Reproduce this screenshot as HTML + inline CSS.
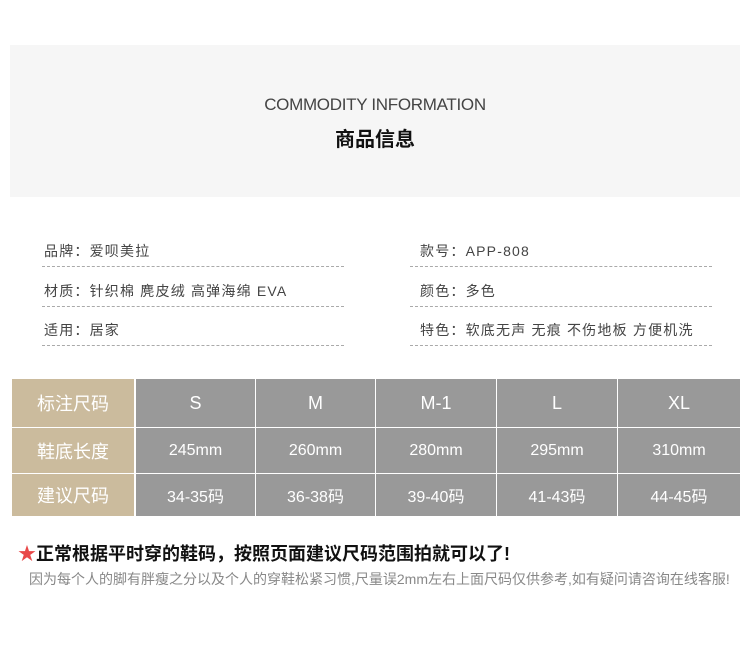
<!DOCTYPE html>
<html><head><meta charset="utf-8"><style>
*{margin:0;padding:0;box-sizing:border-box}
body{width:750px;height:660px;background:#fff;position:relative;font-family:"Liberation Sans","Noto Sans CJK SC",sans-serif;overflow:hidden}
.a{position:absolute;white-space:nowrap}
.box{left:10px;top:45px;width:730px;height:152px;background:#f6f6f6}
.en{left:0;width:750px;text-align:center;top:95px;font-size:17px;color:#444;font-weight:300;letter-spacing:-0.3px}
.zh{left:0;width:750px;text-align:center;top:123px;font-size:20px;font-weight:bold;color:#111}
.f{font-size:14px;color:#444;letter-spacing:1.2px}
.d{height:0;border-top:1px dashed #aaa}
.c{position:absolute;color:#fff;display:flex;align-items:center;justify-content:center;font-size:18px}
.n{font-size:16px}
</style></head><body>
<div class="a box"></div>
<div class="a en">COMMODITY INFORMATION</div>
<div class="a zh">商品信息</div>

<div class="a f" style="left:44px;top:241px">品牌：爱呗美拉</div>
<div class="a f" style="left:420px;top:241px">款号：APP-808</div>
<div class="a f" style="left:44px;top:281px">材质：针织棉 麂皮绒 高弹海绵 EVA</div>
<div class="a f" style="left:420px;top:281px">颜色：多色</div>
<div class="a f" style="left:44px;top:320px">适用：居家</div>
<div class="a f" style="left:420px;top:320px">特色：软底无声 无痕 不伤地板 方便机洗</div>
<div class="a d" style="left:42px;top:266px;width:302px"></div>
<div class="a d" style="left:410px;top:266px;width:302px"></div>
<div class="a d" style="left:42px;top:306px;width:302px"></div>
<div class="a d" style="left:410px;top:306px;width:302px"></div>
<div class="a d" style="left:42px;top:345px;width:302px"></div>
<div class="a d" style="left:410px;top:345px;width:302px"></div>

<div class="c" style="left:12px;top:379px;width:122px;height:48px;background:#cbbb9d">标注尺码</div>
<div class="c" style="left:12px;top:428px;width:122px;height:45px;background:#cbbb9d">鞋底长度</div>
<div class="c" style="left:12px;top:474px;width:122px;height:42px;background:#cbbb9d">建议尺码</div>

<div class="c" style="left:136px;top:379px;width:119px;height:48px;background:#999">S</div>
<div class="c" style="left:256px;top:379px;width:119px;height:48px;background:#999">M</div>
<div class="c" style="left:376px;top:379px;width:120px;height:48px;background:#999">M-1</div>
<div class="c" style="left:497px;top:379px;width:120px;height:48px;background:#999">L</div>
<div class="c" style="left:618px;top:379px;width:122px;height:48px;background:#999">XL</div>

<div class="c n" style="left:136px;top:428px;width:119px;height:45px;background:#999">245mm</div>
<div class="c n" style="left:256px;top:428px;width:119px;height:45px;background:#999">260mm</div>
<div class="c n" style="left:376px;top:428px;width:120px;height:45px;background:#999">280mm</div>
<div class="c n" style="left:497px;top:428px;width:120px;height:45px;background:#999">295mm</div>
<div class="c n" style="left:618px;top:428px;width:122px;height:45px;background:#999">310mm</div>

<div class="c n" style="left:136px;top:474px;width:119px;height:42px;background:#999">34-35码</div>
<div class="c n" style="left:256px;top:474px;width:119px;height:42px;background:#999">36-38码</div>
<div class="c n" style="left:376px;top:474px;width:120px;height:42px;background:#999">39-40码</div>
<div class="c n" style="left:497px;top:474px;width:120px;height:42px;background:#999">41-43码</div>
<div class="c n" style="left:618px;top:474px;width:122px;height:42px;background:#999">44-45码</div>

<div class="a" style="left:18px;top:540px;font-size:18px;font-weight:bold;color:#111"><span style="color:#e84848">★</span>正常根据平时穿的鞋码，按照页面建议尺码范围拍就可以了!</div>
<div class="a" style="left:29px;top:569px;font-size:14px;color:#888;letter-spacing:0">因为每个人的脚有胖瘦之分以及个人的穿鞋松紧习惯,尺量误2mm左右上面尺码仅供参考,如有疑问请咨询在线客服!</div>
</body></html>
